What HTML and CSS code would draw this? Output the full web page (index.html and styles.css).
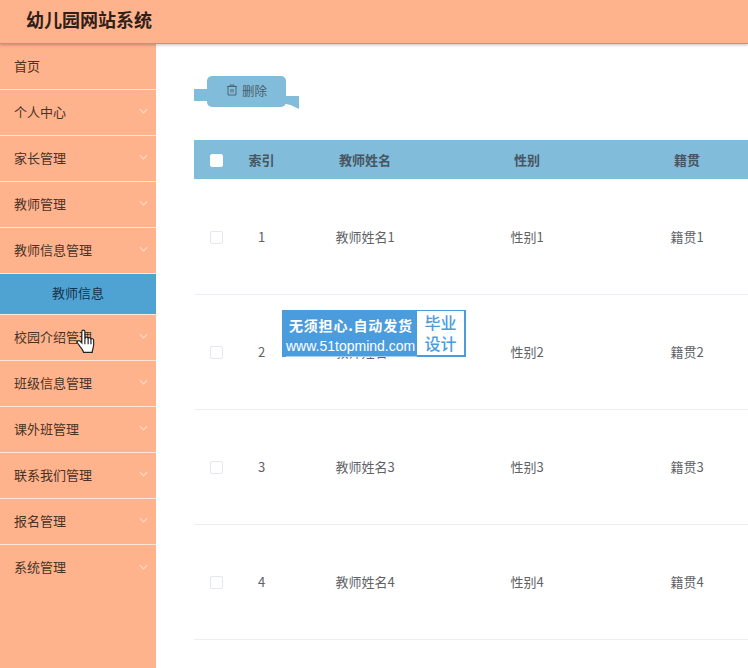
FILE: index.html
```html
<!DOCTYPE html>
<html lang="zh">
<head>
<meta charset="utf-8">
<title>幼儿园网站系统</title>
<link rel="stylesheet" href="styles.css">
</head>
<body>
<div class="app">
  <header class="topbar"><h1 class="brand">幼儿园网站系统</h1></header>
  <div class="body">
    <nav class="side">
      <div class="item"><span>首页</span></div>
      <div class="item"><span>个人中心</span><svg class="chev" viewBox="0 0 10 6"><path d="M1 1l4 4 4-4"/></svg></div>
      <div class="item"><span>家长管理</span><svg class="chev" viewBox="0 0 10 6"><path d="M1 1l4 4 4-4"/></svg></div>
      <div class="item"><span>教师管理</span><svg class="chev" viewBox="0 0 10 6"><path d="M1 1l4 4 4-4"/></svg></div>
      <div class="item"><span>教师信息管理</span><svg class="chev" viewBox="0 0 10 6"><path d="M1 1l4 4 4-4"/></svg></div>
      <div class="sub">教师信息</div>
      <div class="item"><span>校园介绍管理</span><svg class="chev" viewBox="0 0 10 6"><path d="M1 1l4 4 4-4"/></svg></div>
      <div class="item"><span>班级信息管理</span><svg class="chev" viewBox="0 0 10 6"><path d="M1 1l4 4 4-4"/></svg></div>
      <div class="item"><span>课外班管理</span><svg class="chev" viewBox="0 0 10 6"><path d="M1 1l4 4 4-4"/></svg></div>
      <div class="item"><span>联系我们管理</span><svg class="chev" viewBox="0 0 10 6"><path d="M1 1l4 4 4-4"/></svg></div>
      <div class="item"><span>报名管理</span><svg class="chev" viewBox="0 0 10 6"><path d="M1 1l4 4 4-4"/></svg></div>
      <div class="item last"><span>系统管理</span><svg class="chev" viewBox="0 0 10 6"><path d="M1 1l4 4 4-4"/></svg></div>
    </nav>
    <main class="main">
      <div class="toolbar">
        <button class="del">
          <svg class="trash" viewBox="0 0 12 12"><path d="M1 2.500h10M4 2.500V1h4v1.500M2 2.500V11h8V2.500M5 5v3.500M7 5v3.500"/></svg>
          <span>删除</span>
        </button>
      </div>
      <div class="table">
        <div class="row head">
          <div class="c c1"><i class="box on"></i></div><div class="c c2">索引</div><div class="c c3">教师姓名</div><div class="c c4">性别</div><div class="c c5">籍贯</div>
        </div>
        <div class="row">
          <div class="c c1"><i class="box"></i></div><div class="c c2">1</div><div class="c c3">教师姓名1</div><div class="c c4">性别1</div><div class="c c5">籍贯1</div>
        </div>
        <div class="row">
          <div class="c c1"><i class="box"></i></div><div class="c c2">2</div><div class="c c3">教师姓名2</div><div class="c c4">性别2</div><div class="c c5">籍贯2</div>
        </div>
        <div class="row">
          <div class="c c1"><i class="box"></i></div><div class="c c2">3</div><div class="c c3">教师姓名3</div><div class="c c4">性别3</div><div class="c c5">籍贯3</div>
        </div>
        <div class="row">
          <div class="c c1"><i class="box"></i></div><div class="c c2">4</div><div class="c c3">教师姓名4</div><div class="c c4">性别4</div><div class="c c5">籍贯4</div>
        </div>
      </div>
    </main>
  </div>
  <div class="promo">
    <div class="promo-l"><div class="promo-a">无须担心.自动发货</div><div class="promo-b">www.51topmind.com</div></div>
    <div class="promo-r">毕业<br>设计</div>
  </div>
  <svg class="hand" viewBox="0 0 18 24"><path d="M5 2.200c0-1.600 2.600-1.600 2.600 0V9l.4-1.600c.9-.9 2.200-.5 2.400.5.800-.9 2.200-.5 2.400.6.900-.6 2.200-.2 2.300 1 .2 2.500.1 5-.5 7-.4 1.400-.7 2.300-.7 3.500H6.500c-.4-1.700-1.500-3-2.800-4.700L1.300 12c-.8-1.300.7-2.700 2-1.800L5 12z"/><path d="M7.600 9v4M10.400 8v5M12.800 8.700V13"/></svg>
</div>
</body>
</html>
```

FILE: styles.css
```css
* { box-sizing: border-box; }
html, body { margin: 0; padding: 0; }
body {
  width: 748px;
  height: 668px;
  overflow: hidden;
  background: #fff;
  font-family: "Noto Sans CJK SC", "Liberation Sans", sans-serif;
  font-size: 13px;
  color: #606266;
}
.app { position: relative; width: 748px; height: 668px; overflow: hidden; }
.topbar {
  height: 44px;
  background: #ffb38d;
  padding-left: 27px;
  display: flex;
  align-items: center;
  border-bottom: 1px solid #bd9682;
  box-shadow: 0 1px 3px rgba(0,0,0,.25);
  position: relative;
  z-index: 2;
}
.brand { margin: 0 1px 6px -1px; font-size: 18px; font-weight: 700; color: #2f2019; line-height: 26px; }
.body { display: flex; height: 624px; }
.side { width: 156px; flex: none; background: #ffb38d; color: #4a3226; }
.item {
  height: 46px;
  padding: 0 8px 3px 14px;
  display: flex;
  align-items: center;
  justify-content: space-between;
  border-bottom: 1px solid #ffe6d8;
}
.item.last { border-bottom: 0; }
.chev { width: 9px; height: 6px; fill: none; stroke: #ffd9c4; stroke-width: 1.300; }
.sub {
  height: 41px;
  padding: 0 0 4px 0;
  background: #4fa3d3;
  color: #17324a;
  display: flex;
  align-items: center;
  justify-content: center;
  border-bottom: 1px solid #ffe6d8;
}
.main { flex: 1; min-width: 0; padding: 32px 0 0 38px; background: #fff; }
.toolbar { height: 64px; }
.del {
  position: relative;
  margin-left: 13px;
  width: 79px;
  height: 31px;
  border: 0;
  border-radius: 5px;
  background: #82bcdb;
  color: #4b5d68;
  font: inherit;
  font-size: 12.500px;
  display: flex;
  align-items: center;
  justify-content: center;
  gap: 4px;
  padding: 0 0 3px;
}
.del::before {
  content: "";
  position: absolute;
  left: -13px;
  top: 13px;
  width: 14px;
  height: 12px;
  background: #82bcdb;
}
.del::after {
  content: "";
  position: absolute;
  right: -13px;
  top: 20px;
  width: 14px;
  height: 13px;
  background: #82bcdb;
  clip-path: polygon(0 0, 100% 0, 100% 100%, 40% 70%, 0 60%);
}
.trash { width: 12px; height: 12px; fill: none; stroke: #4b5d68; stroke-width: .9; }
.table { width: 572px; }
.row { display: flex; height: 115px; padding-bottom: 2px; align-items: center; border-bottom: 1px solid #ebeef5; text-align: center; }
.row.head {
  height: 39px;
  margin-bottom: 1px;
  padding-bottom: 0;
  background: #82bcdb;
  border-bottom: 0;
  font-weight: 700;
  color: #475661;
}
.c { flex: none; }
.c1 { width: 45px; display: flex; justify-content: center; padding-top: 2px; }
.c2 { width: 45px; }
.c3 { width: 162px; }
.c4 { width: 162px; }
.c5 { width: 158px; }
.box { display: block; width: 13px; height: 13px; border: 1px solid #e4e7ed; border-radius: 2px; background: #fff; }
.box.on { border-color: #fff; }
.promo {
  position: absolute;
  left: 282px;
  top: 310px;
  width: 184px;
  height: 47px;
  background: #4b9cdc;
  display: flex;
  color: #fff;
}
.promo-l { flex: 1; min-width: 0; padding: 5px 0 0 4px; }
.promo-a { font-size: 14px; line-height: 21px; font-weight: 700; letter-spacing: 0.800px; white-space: nowrap; padding-left: 3px; }
.promo-b { font-family: "Liberation Sans", sans-serif; font-size: 14px; line-height: 20px; border-bottom: 1px solid #a9cfee; white-space: nowrap; }
.promo-r {
  width: 47px;
  margin: 1px 2px 2px 0;
  background: #fff;
  color: #4b9cdc;
  font-size: 16px;
  font-weight: 500;
  line-height: 21px;
  text-align: center;
  padding-top: 1px;
}
.hand {
  position: absolute;
  left: 76px;
  top: 329px;
  width: 21px;
  height: 28px;
  fill: #fff;
  stroke: #222;
  stroke-width: 1;
}
```
